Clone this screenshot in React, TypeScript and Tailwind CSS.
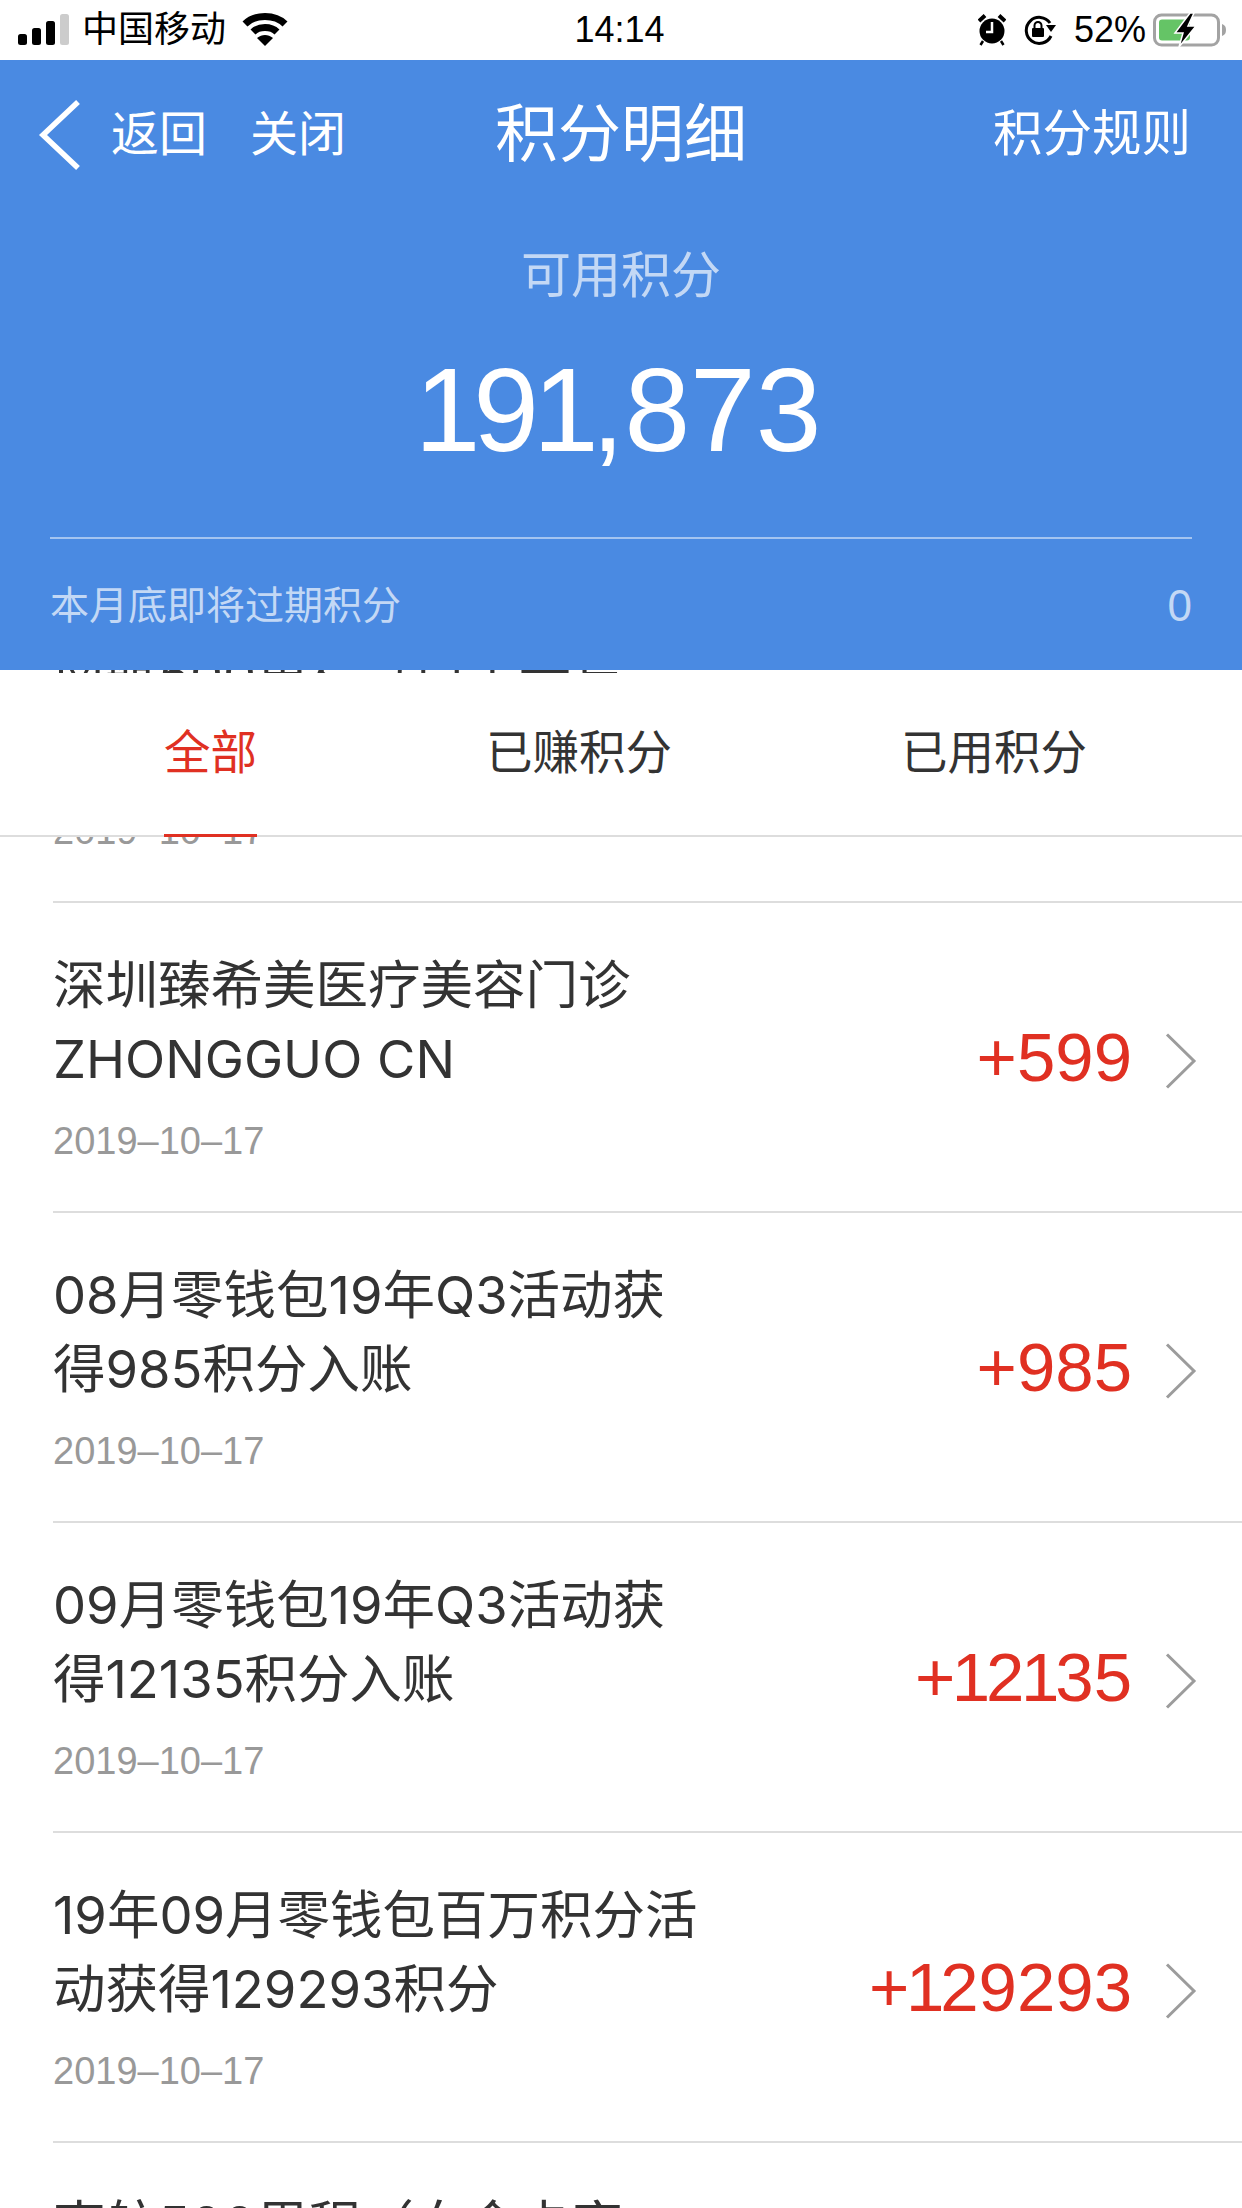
const FONT = "font-['Liberation_Sans','Noto_Sans_CJK_SC',sans-serif]"

const ROWS = [
  { title: "南航500里程（白金卡宾\n客专享）", amount: "+500" },
  { title: "深圳臻希美医疗美容门诊\nZHONGGUO CN", amount: "+599" },
  { title: "08月零钱包19年Q3活动获\n得985积分入账", amount: "+985" },
  { title: "09月零钱包19年Q3活动获\n得12135积分入账", amount: "+12135" },
  { title: "19年09月零钱包百万积分活\n动获得129293积分", amount: "+129293" },
  { title: "南航500里程（白金卡宾\n客专享）", amount: "+500" },
]

// the "1" is narrower than the other digits in the reference
const Digits = ({ value }: { value: string }) => (
  <>
    {value.split("").map((ch, i) =>
      ch === "1" ? (
        <span key={i} className="-ml-[0.05em] tracking-[-0.06em]">
          {ch}
        </span>
      ) : (
        ch
      )
    )}
  </>
)

const StatusBar = () => (
  <div className="grid h-[60px] grid-cols-[1fr_auto_1fr] items-center bg-white pl-[18px] pr-[21px] text-black">
    <div className="flex items-center">
      <svg width="52" height="32" viewBox="0 0 52 32">
        <rect x="0" y="20" width="9" height="11" rx="2.5" fill="#000" />
        <rect x="14" y="14" width="9" height="17" rx="2.5" fill="#000" />
        <rect x="28" y="7" width="9" height="24" rx="2.5" fill="#000" />
        <rect x="42" y="0" width="9" height="31" rx="2.5" fill="#ccc" />
      </svg>
      <span className="ml-[12px] text-[36px] leading-none">中国移动</span>
      <svg className="ml-[16px]" width="46" height="34" viewBox="0 0 46 34" fill="none">
        <path d="M3 11 C13 1 33 1 43 11" stroke="#000" strokeWidth="7" />
        <path d="M11 19 C17 13 29 13 35 19" stroke="#000" strokeWidth="7" />
        <path d="M15 25 C20 21 26 21 31 25 L23 33 Z" fill="#000" />
      </svg>
    </div>
    <span className="text-[36px] leading-none">14:14</span>
    <div className="-mr-[6px] flex items-center justify-end">
      <svg width="28" height="32" viewBox="0 0 28 32">
        <circle cx="14" cy="17" r="12.5" fill="#000" />
        <path d="M1 7 L7 1.5 M27 7 L21 1.5" stroke="#000" strokeWidth="4" />
        <path d="M5 27 L2.5 31 M23 27 L25.5 31" stroke="#000" strokeWidth="2.5" />
        <path d="M14 8 V18 H8" stroke="#fff" strokeWidth="2.5" fill="none" />
      </svg>
      <svg className="ml-[17px]" width="34" height="32" viewBox="0 0 34 32" fill="none">
        <path d="M28 22 A13 13 0 1 1 27 9" stroke="#000" strokeWidth="3" />
        <path d="M23 11 H33 L28 18 Z" fill="#000" />
        <rect x="9" y="14" width="12" height="9" rx="1" fill="#000" />
        <path d="M11.5 14 V11.5 A3.5 3.5 0 0 1 18.5 11.5 V14" stroke="#000" strokeWidth="2" />
      </svg>
      <span className="ml-[17px] text-[36px] leading-none">52%</span>
      <svg className="ml-[7px]" width="74" height="34" viewBox="0 0 74 34" fill="none">
        <rect x="1.5" y="2" width="64" height="30" rx="7" stroke="#a3a3a3" strokeWidth="3" />
        <rect x="6" y="6.5" width="31" height="21" rx="3" fill="#65c466" />
        <path d="M37 0 L22 20 H30 L26 34 L43 13 H35 L41 0 Z" fill="#000" stroke="#fff" strokeWidth="1.5" />
        <path d="M69 11 C72 12 73 14 73 17 C73 20 72 22 69 23 Z" fill="#a3a3a3" />
      </svg>
    </div>
  </div>
)

const Summary = () => (
  <div className="relative z-20 flex h-[610px] flex-col bg-[#4a8ae2] text-white">
    <div className="grid h-[146px] grid-cols-[1fr_auto_1fr] items-center px-[51px] pt-[3px]">
      <div className="-ml-[13px] flex items-center text-[48px]">
        <svg width="44" height="72" viewBox="0 0 44 72" fill="none">
          <path d="M40 3 L5 36 L40 69" stroke="#fff" strokeWidth="5.5" />
        </svg>
        <span className="ml-[29px]">返回</span>
        <span className="ml-[43px]">关闭</span>
      </div>
      <span className="text-[63px]">积分明细</span>
      <span className="text-right text-[49.5px]">积分规则</span>
    </div>
    <div className="mt-[40px] text-center text-[50px] leading-[60px] text-[#c3d8f5]">可用积分</div>
    <div className="mt-[34px] text-center text-[118px] leading-[140px]">
      <Digits value="191,873" />
    </div>
    <div className="mx-[50px] mt-[57px] h-[2px] bg-[#a4c4f0]" />
    <div className="mx-[50px] mt-[45px] flex items-center justify-between text-[39px] leading-[44px] text-[#c3d8f5]">
      <span>本月底即将过期积分</span>
      <span className="text-[44px]">0</span>
    </div>
  </div>
)

const Tabs = () => (
  <div className="relative z-10 mt-[3px] flex h-[164px] items-center gap-[229px] border-b-2 border-[#ddd] bg-white pl-[164px] text-[46.5px] text-[#333]">
    <span className="relative flex h-full items-center text-[#e03022]">
      全部
      <span className="absolute -bottom-[2px] left-0 h-[3px] w-full bg-[#e03022]" />
    </span>
    <span>已赚积分</span>
    <span>已用积分</span>
  </div>
)

const Row = ({ title, amount }: { title: string; amount: string }) => (
  <div className="ml-[53px] flex h-[310px] items-center border-b-2 border-[#ddd] pr-[45px]">
    <div className="flex-1 self-start pt-[45px]">
      <div className="whitespace-pre-line font-['Inter','Noto_Sans_CJK_SC',sans-serif] text-[52.5px] leading-[74px] text-[#333]">
        {title}
      </div>
      <div className="mt-[20px] text-[38px] leading-[50px] text-[#999]">2019–10–17</div>
    </div>
    <span className="text-[69px] leading-none text-[#e03022]">
      <Digits value={amount} />
    </span>
    <svg className="ml-[33px] mt-[8px]" width="32" height="56" viewBox="0 0 32 56" fill="none">
      <path d="M2 1.5 L29 28 L2 54.5" stroke="#9c9c9c" strokeWidth="3" />
    </svg>
  </div>
)

export default function App() {
  return (
    <div className={`${FONT} flex h-[2208px] w-[1242px] flex-col overflow-hidden bg-white`}>
      <StatusBar />
      <Summary />
      <Tabs />
      <div className="-mt-[167px] min-h-0 flex-1 overflow-hidden">
        <div className="-mt-[77px]">
          {ROWS.map((row, i) => (
            <Row key={i} title={row.title} amount={row.amount} />
          ))}
        </div>
      </div>
    </div>
  )
}
